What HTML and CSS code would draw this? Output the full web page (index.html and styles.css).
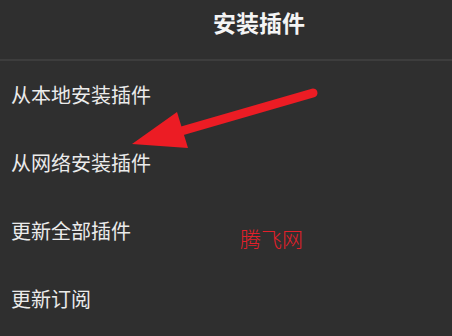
FILE: index.html
```html
<!DOCTYPE html>
<html lang="zh-CN">
<head>
<meta charset="utf-8">
<title>安装插件</title>
<link rel="stylesheet" href="styles.css">
</head>
<body>
<div class="page">
  <header class="header">
    <h1 class="title">安装插件</h1>
  </header>
  <ul class="menu">
    <li class="item">从本地安装插件</li>
    <li class="item">从网络安装插件</li>
    <li class="item">更新全部插件</li>
    <li class="item">更新订阅</li>
  </ul>
  <svg class="arrow" width="452" height="336" viewBox="0 0 452 336" aria-hidden="true">
    <line x1="313" y1="93" x2="178" y2="132" stroke="#ec1c24" stroke-width="9" stroke-linecap="round"/>
    <polygon points="132,144 177,112 188,148" fill="#ec1c24"/>
  </svg>
  <div class="watermark">腾飞网</div>
</div>
</body>
</html>
```
FILE: styles.css
```css
html, body {
  margin: 0;
  padding: 0;
  background: #2f2f2f;
}
.page {
  position: relative;
  width: 452px;
  height: 336px;
  overflow: hidden;
  background: #2f2f2f;
  font-family: "Noto Sans CJK SC", "Noto Sans", sans-serif;
  color: #ebebeb;
}
.header {
  height: 59px;
  border-bottom: 2px solid #3d3d3d;
  display: flex;
  align-items: center;
  padding-left: 213px;
  box-sizing: content-box;
}
.title {
  margin: 0;
  margin-top: -14px;
  font-size: 23px;
  font-weight: 700;
  line-height: 1;
  color: #f4f4f4;
}
.menu {
  list-style: none;
  margin: 0;
  padding: 0;
}
.item {
  height: 68px;
  display: flex;
  align-items: center;
  padding-left: 11px;
  font-size: 20px;
  line-height: 1;
}
.arrow {
  position: absolute;
  left: 0;
  top: 0;
}
.watermark {
  position: absolute;
  left: 240px;
  top: 228px;
  font-size: 21px;
  line-height: 21px;
  font-weight: 300;
  color: #e3202a;
}
```
